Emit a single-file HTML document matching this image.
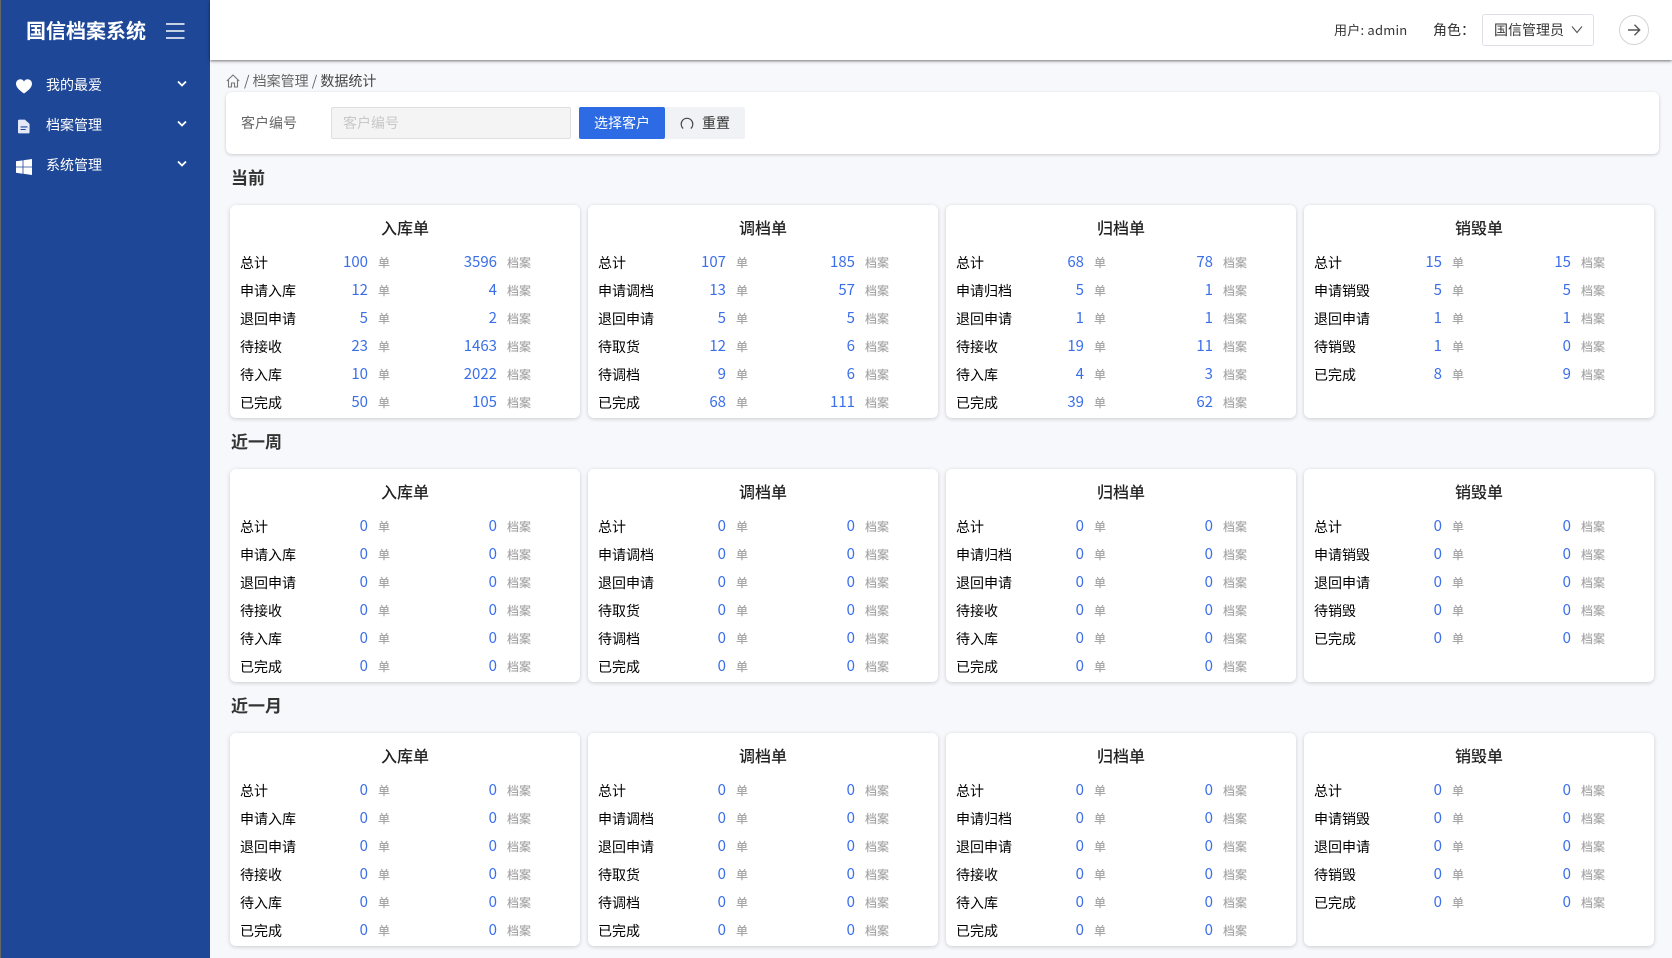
<!DOCTYPE html>
<html lang="zh-CN"><head><meta charset="utf-8"><title>国信档案系统</title>
<style>
*{box-sizing:border-box}
html,body{margin:0;padding:0;width:1672px;height:958px;overflow:hidden;background:#f7f8fc;font-family:"Liberation Sans","Noto Sans CJK SC",sans-serif;}
body,.r,.t,.h,.abs{font-family:"Noto Sans CJK SC","Liberation Sans",sans-serif}
.abs{position:absolute;white-space:nowrap}
#side{position:absolute;left:0;top:0;width:210px;height:958px;background:#1e4798;border-left:1px solid #666}
#head{position:absolute;left:210px;top:0;width:1462px;height:60px;background:#fff;box-shadow:0 1px 3px rgba(0,0,0,.55)}
.card{position:absolute;width:350px;height:213px;background:#fff;border-radius:6px;box-shadow:0 1px 4px rgba(0,0,0,.18)}
.t{position:absolute;left:0;right:0;top:10px;text-align:center;font-size:16px;font-weight:500;line-height:24px;color:#222}
.r{position:absolute;left:10px;display:grid;grid-template-columns:70px 58px 72px 57px 70px;font-size:14px;line-height:20px;height:20px;color:#000}
.r i{font-style:normal;text-align:right;color:#3b6fe8;font-size:15px;position:relative;top:-1px}
.r u{text-decoration:none;color:#a6a6a6;font-size:12px;font-weight:500;padding-left:10px}
.r:nth-of-type(2){top:48px}.r:nth-of-type(3){top:76px}.r:nth-of-type(4){top:104px}.r:nth-of-type(5){top:132px}.r:nth-of-type(6){top:160px}.r:nth-of-type(7){top:188px}
.h{position:absolute;left:231px;font-size:17px;font-weight:700;color:#333;line-height:24px}
.c1{left:230px}.c2{left:588px}.c3{left:946px}.c4{left:1304px}
.y1{top:205px}.y2{top:469px}.y3{top:733px}
.m{font-size:14px;color:#fff;line-height:20px}
</style></head><body>
<div id="side"></div>
<div class="abs" style="left:26px;top:16px;font-size:20px;font-weight:700;line-height:28px;color:#fff">国信档案系统</div>
<svg class="abs" style="left:166px;top:22px" width="19" height="18" viewBox="0 0 19 18"><path d="M0 2h18.500M0 9h18.500M0 16h18.500" stroke="#fff" stroke-width="1.600" fill="none"/></svg>
<svg class="abs" style="left:16px;top:79px" width="16" height="15" viewBox="0 0 17 16"><path d="M8.500 15.500C3 11.500 0 8.500 0 5 0 2.200 2.100.3 4.500.3c1.700 0 3.200.8 4 2.300C9.300 1.100 10.800.3 12.500.3 14.900.3 17 2.200 17 5c0 3.500-3 6.500-8.500 10.500z" fill="#fff"/></svg>
<svg class="abs" style="left:18px;top:119px" width="12" height="15" viewBox="0 0 14 16"><path d="M1.500 0H8l5.500 5v9.500a1.500 1.500 0 0 1-1.500 1.500h-10.500A1.500 1.500 0 0 1 0 14.500v-13A1.500 1.500 0 0 1 1.500 0z" fill="#e3e9f6"/><path d="M3 8.500h8M3 11.500h6" stroke="#1e4798" stroke-width="1.200"/></svg>
<svg class="abs" style="left:16px;top:159px" width="16" height="16" viewBox="0 0 16 16"><path d="M0 2.300l6.600-.9v6.200H0zM7.400 1.300L16 0v7.600H7.400zM0 8.400h6.600v6.300L0 13.800zM7.400 8.400H16V16l-8.600-1.200z" fill="#fff"/></svg>
<div class="abs m" style="left:46px;top:75px">我的最爱</div>
<div class="abs m" style="left:46px;top:115px">档案管理</div>
<div class="abs m" style="left:46px;top:155px">系统管理</div>
<svg class="abs" style="left:176px;top:80px" width="12" height="8" viewBox="0 0 12 8"><path d="M2 1.500l4 4 4-4" stroke="#fff" stroke-width="1.800" fill="none"/></svg>
<svg class="abs" style="left:176px;top:120px" width="12" height="8" viewBox="0 0 12 8"><path d="M2 1.500l4 4 4-4" stroke="#fff" stroke-width="1.800" fill="none"/></svg>
<svg class="abs" style="left:176px;top:160px" width="12" height="8" viewBox="0 0 12 8"><path d="M2 1.500l4 4 4-4" stroke="#fff" stroke-width="1.800" fill="none"/></svg>

<div id="head"></div>
<div class="abs" style="left:1334px;top:20px;font-size:13px;letter-spacing:.22px;line-height:20px;color:#333">用户: admin</div>
<div class="abs" style="left:1433px;top:20px;font-size:14px;line-height:20px;color:#333">角色：</div>
<div class="abs" style="left:1482px;top:14px;width:112px;height:32px;border:1px solid #dcdfe6;border-radius:3px;background:#fff"></div>
<div class="abs" style="left:1494px;top:20px;font-size:14px;line-height:20px;color:#333">国信管理员</div>
<svg class="abs" style="left:1571px;top:25px" width="12" height="9" viewBox="0 0 12 9"><path d="M1 1.500l5 6 5-6" stroke="#555" stroke-width="1.100" fill="none"/></svg>
<svg class="abs" style="left:1619px;top:15px" width="30" height="30" viewBox="0 0 30 30"><circle cx="15" cy="15" r="14.500" fill="#fff" stroke="#d4d4d4"/><path d="M9 15h11.500M15.500 9.800l5.200 5.200-5.200 5.200" stroke="#555" stroke-width="1.400" fill="none"/></svg>

<svg class="abs" style="left:226px;top:74px" width="14" height="14" viewBox="0 0 14 14"><path d="M.8 7L7 1l6.200 6M2.500 6v7h3V9h3v4h3V6" stroke="#777" stroke-width="1.100" fill="none"/></svg>
<div class="abs" style="left:244px;top:71px;font-size:14px;line-height:20px;color:#666">/ 档案管理 / <span style="color:#444">数据统计</span></div>

<div class="abs" style="left:226px;top:92px;width:1433px;height:62px;background:#fff;border-radius:6px;box-shadow:0 1px 3px rgba(0,0,0,.18)"></div>
<div class="abs" style="left:241px;top:113px;font-size:14px;line-height:20px;color:#666">客户编号</div>
<div class="abs" style="left:331px;top:107px;width:240px;height:32px;background:#f4f4f4;border:1px solid #dfdfdf;border-radius:2px;padding-left:11px;font-size:14px;line-height:31px;color:#c8c8c8">客户编号</div>
<div class="abs" style="left:579px;top:107px;width:86px;height:32px;background:#2d6be4;border-radius:2px;text-align:center;font-size:14px;line-height:33px;color:#fff">选择客户</div>
<div class="abs" style="left:665px;top:107px;width:80px;height:32px;background:#f1f2f5;border-radius:2px"></div>
<svg class="abs" style="left:680px;top:116px" width="14" height="14" viewBox="0 0 14 14"><path d="M3.200 12.500A5.800 5.800 0 1 1 10.800 12.500" stroke="#444" stroke-width="1.200" fill="none"/></svg>
<div class="abs" style="left:702px;top:113px;font-size:14px;line-height:20px;color:#333">重置</div>

<div class="h" style="top:165px">当前</div>
<div class="h" style="top:429px">近一周</div>
<div class="h" style="top:693px">近一月</div>

<div class="card c1 y1"><div class="t">入库单</div>
<div class="r">总计<i>100</i><u>单</u><i>3596</i><u>档案</u></div>
<div class="r">申请入库<i>12</i><u>单</u><i>4</i><u>档案</u></div>
<div class="r">退回申请<i>5</i><u>单</u><i>2</i><u>档案</u></div>
<div class="r">待接收<i>23</i><u>单</u><i>1463</i><u>档案</u></div>
<div class="r">待入库<i>10</i><u>单</u><i>2022</i><u>档案</u></div>
<div class="r">已完成<i>50</i><u>单</u><i>105</i><u>档案</u></div></div>
<div class="card c2 y1"><div class="t">调档单</div>
<div class="r">总计<i>107</i><u>单</u><i>185</i><u>档案</u></div>
<div class="r">申请调档<i>13</i><u>单</u><i>57</i><u>档案</u></div>
<div class="r">退回申请<i>5</i><u>单</u><i>5</i><u>档案</u></div>
<div class="r">待取货<i>12</i><u>单</u><i>6</i><u>档案</u></div>
<div class="r">待调档<i>9</i><u>单</u><i>6</i><u>档案</u></div>
<div class="r">已完成<i>68</i><u>单</u><i>111</i><u>档案</u></div></div>
<div class="card c3 y1"><div class="t">归档单</div>
<div class="r">总计<i>68</i><u>单</u><i>78</i><u>档案</u></div>
<div class="r">申请归档<i>5</i><u>单</u><i>1</i><u>档案</u></div>
<div class="r">退回申请<i>1</i><u>单</u><i>1</i><u>档案</u></div>
<div class="r">待接收<i>19</i><u>单</u><i>11</i><u>档案</u></div>
<div class="r">待入库<i>4</i><u>单</u><i>3</i><u>档案</u></div>
<div class="r">已完成<i>39</i><u>单</u><i>62</i><u>档案</u></div></div>
<div class="card c4 y1"><div class="t">销毁单</div>
<div class="r">总计<i>15</i><u>单</u><i>15</i><u>档案</u></div>
<div class="r">申请销毁<i>5</i><u>单</u><i>5</i><u>档案</u></div>
<div class="r">退回申请<i>1</i><u>单</u><i>1</i><u>档案</u></div>
<div class="r">待销毁<i>1</i><u>单</u><i>0</i><u>档案</u></div>
<div class="r">已完成<i>8</i><u>单</u><i>9</i><u>档案</u></div></div>

<div class="card c1 y2"><div class="t">入库单</div>
<div class="r">总计<i>0</i><u>单</u><i>0</i><u>档案</u></div>
<div class="r">申请入库<i>0</i><u>单</u><i>0</i><u>档案</u></div>
<div class="r">退回申请<i>0</i><u>单</u><i>0</i><u>档案</u></div>
<div class="r">待接收<i>0</i><u>单</u><i>0</i><u>档案</u></div>
<div class="r">待入库<i>0</i><u>单</u><i>0</i><u>档案</u></div>
<div class="r">已完成<i>0</i><u>单</u><i>0</i><u>档案</u></div></div>
<div class="card c2 y2"><div class="t">调档单</div>
<div class="r">总计<i>0</i><u>单</u><i>0</i><u>档案</u></div>
<div class="r">申请调档<i>0</i><u>单</u><i>0</i><u>档案</u></div>
<div class="r">退回申请<i>0</i><u>单</u><i>0</i><u>档案</u></div>
<div class="r">待取货<i>0</i><u>单</u><i>0</i><u>档案</u></div>
<div class="r">待调档<i>0</i><u>单</u><i>0</i><u>档案</u></div>
<div class="r">已完成<i>0</i><u>单</u><i>0</i><u>档案</u></div></div>
<div class="card c3 y2"><div class="t">归档单</div>
<div class="r">总计<i>0</i><u>单</u><i>0</i><u>档案</u></div>
<div class="r">申请归档<i>0</i><u>单</u><i>0</i><u>档案</u></div>
<div class="r">退回申请<i>0</i><u>单</u><i>0</i><u>档案</u></div>
<div class="r">待接收<i>0</i><u>单</u><i>0</i><u>档案</u></div>
<div class="r">待入库<i>0</i><u>单</u><i>0</i><u>档案</u></div>
<div class="r">已完成<i>0</i><u>单</u><i>0</i><u>档案</u></div></div>
<div class="card c4 y2"><div class="t">销毁单</div>
<div class="r">总计<i>0</i><u>单</u><i>0</i><u>档案</u></div>
<div class="r">申请销毁<i>0</i><u>单</u><i>0</i><u>档案</u></div>
<div class="r">退回申请<i>0</i><u>单</u><i>0</i><u>档案</u></div>
<div class="r">待销毁<i>0</i><u>单</u><i>0</i><u>档案</u></div>
<div class="r">已完成<i>0</i><u>单</u><i>0</i><u>档案</u></div></div>

<div class="card c1 y3"><div class="t">入库单</div>
<div class="r">总计<i>0</i><u>单</u><i>0</i><u>档案</u></div>
<div class="r">申请入库<i>0</i><u>单</u><i>0</i><u>档案</u></div>
<div class="r">退回申请<i>0</i><u>单</u><i>0</i><u>档案</u></div>
<div class="r">待接收<i>0</i><u>单</u><i>0</i><u>档案</u></div>
<div class="r">待入库<i>0</i><u>单</u><i>0</i><u>档案</u></div>
<div class="r">已完成<i>0</i><u>单</u><i>0</i><u>档案</u></div></div>
<div class="card c2 y3"><div class="t">调档单</div>
<div class="r">总计<i>0</i><u>单</u><i>0</i><u>档案</u></div>
<div class="r">申请调档<i>0</i><u>单</u><i>0</i><u>档案</u></div>
<div class="r">退回申请<i>0</i><u>单</u><i>0</i><u>档案</u></div>
<div class="r">待取货<i>0</i><u>单</u><i>0</i><u>档案</u></div>
<div class="r">待调档<i>0</i><u>单</u><i>0</i><u>档案</u></div>
<div class="r">已完成<i>0</i><u>单</u><i>0</i><u>档案</u></div></div>
<div class="card c3 y3"><div class="t">归档单</div>
<div class="r">总计<i>0</i><u>单</u><i>0</i><u>档案</u></div>
<div class="r">申请归档<i>0</i><u>单</u><i>0</i><u>档案</u></div>
<div class="r">退回申请<i>0</i><u>单</u><i>0</i><u>档案</u></div>
<div class="r">待接收<i>0</i><u>单</u><i>0</i><u>档案</u></div>
<div class="r">待入库<i>0</i><u>单</u><i>0</i><u>档案</u></div>
<div class="r">已完成<i>0</i><u>单</u><i>0</i><u>档案</u></div></div>
<div class="card c4 y3"><div class="t">销毁单</div>
<div class="r">总计<i>0</i><u>单</u><i>0</i><u>档案</u></div>
<div class="r">申请销毁<i>0</i><u>单</u><i>0</i><u>档案</u></div>
<div class="r">退回申请<i>0</i><u>单</u><i>0</i><u>档案</u></div>
<div class="r">待销毁<i>0</i><u>单</u><i>0</i><u>档案</u></div>
<div class="r">已完成<i>0</i><u>单</u><i>0</i><u>档案</u></div></div>
</body></html>
